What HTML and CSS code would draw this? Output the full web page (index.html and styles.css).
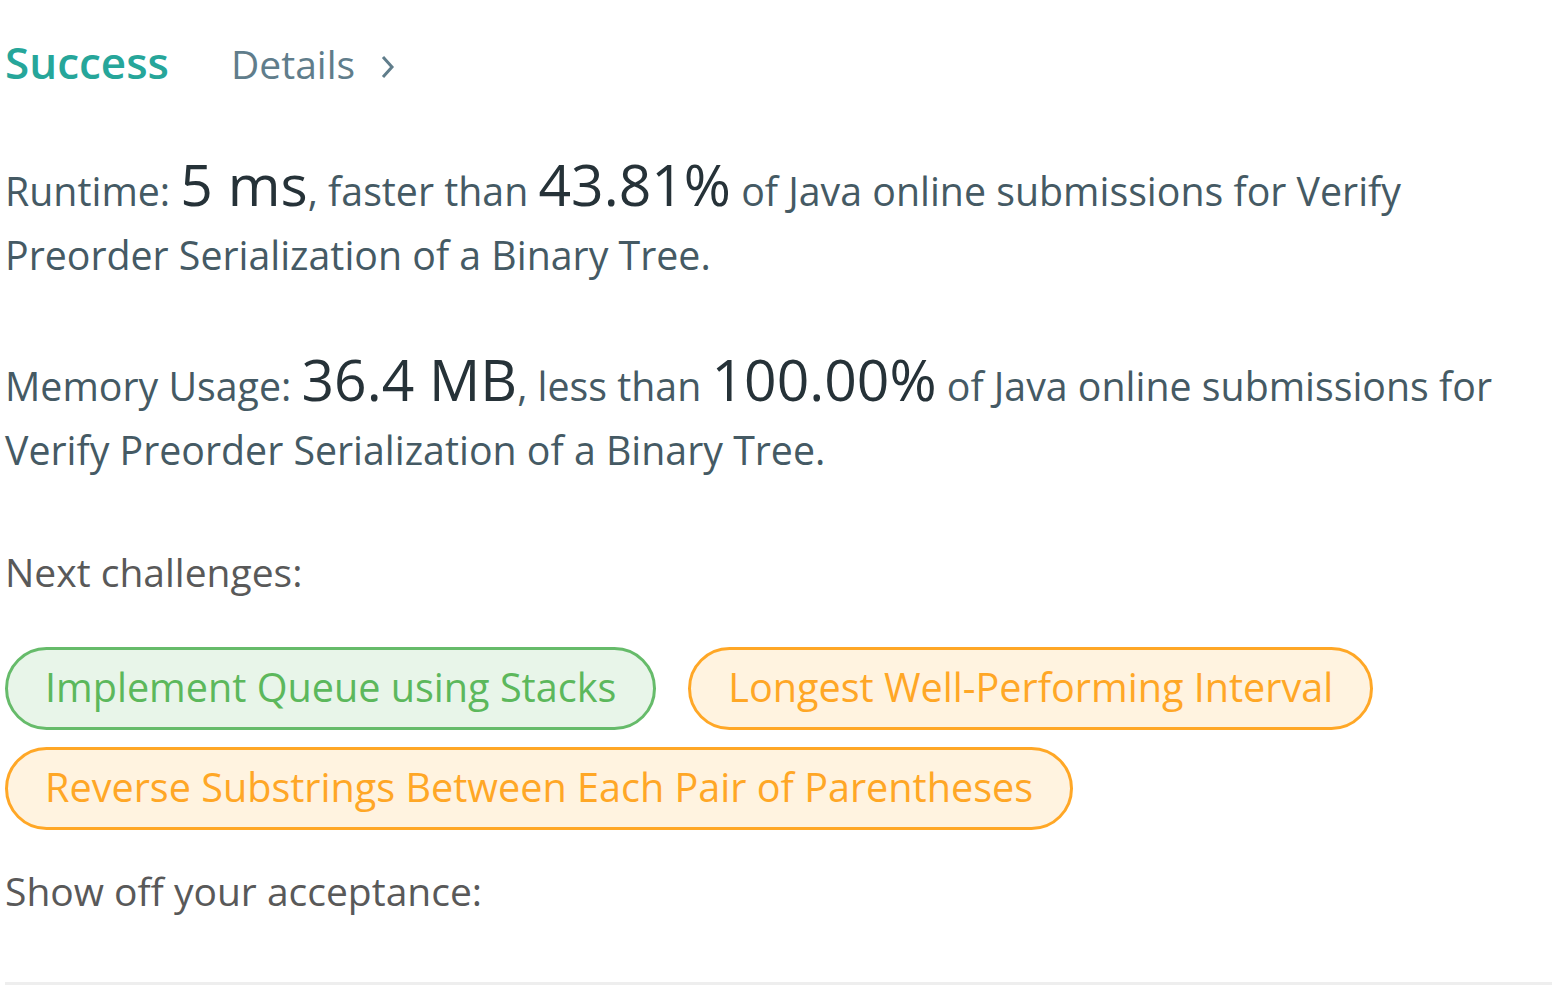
FILE: index.html
```html
<!DOCTYPE html>
<html>
<head>
<meta charset="utf-8">
<link rel="stylesheet" href="styles.css">
</head>
<body>
<div class="page">
  <div class="header">
    <span class="status">Success</span>
    <a class="details">Details <svg class="chev" width="14" height="24" viewBox="0 0 14 24"><path d="M2 2 L11 12 L2 22" fill="none" stroke="#607d8b" stroke-width="3"/></svg></a>
  </div>
  <p class="stat">Runtime: <span class="big">5 ms</span>, faster than <span class="big">43.81%</span> of Java online submissions for Verify Preorder Serialization of a Binary Tree.</p>
  <p class="stat">Memory Usage: <span class="big">36.4 MB</span>, less than <span class="big">100.00%</span> of Java online submissions for Verify Preorder Serialization of a Binary Tree.</p>
  <p class="label">Next challenges:</p>
  <div class="pills">
    <a class="pill easy">Implement Queue using Stacks</a>
    <a class="pill medium">Longest Well-Performing Interval</a>
    <a class="pill medium">Reverse Substrings Between Each Pair of Parentheses</a>
  </div>
  <p class="label show">Show off your acceptance:</p>
  <div class="rule"></div>
</div>
</body>
</html>
```
FILE: styles.css
```css
html, body {
  margin: 0;
  padding: 0;
  background: #fff;
}
body {
  font-family: "Open Sans", "Noto Sans", sans-serif;
  overflow: hidden;
}
.page {
  padding: 0 0 0 5px;
}
.header {
  display: flex;
  align-items: baseline;
  height: 152px;
  padding-top: 32px;
  box-sizing: border-box;
}
.status {
  font-size: 44px;
  font-weight: 600;
  color: #26a69a;
}
.details {
  display: inline-flex;
  align-items: center;
  margin-left: 62px;
  font-size: 39px;
  color: #607d8b;
}
.chev {
  margin-left: 26px;
  margin-top: 6px;
}
.stat {
  margin: 0 0 60px 0;
  font-size: 39.3px;
  line-height: 64px;
  color: #455a64;
}
.big {
  font-size: 57px;
  color: #263238;
}
.label {
  margin: 0;
  font-size: 39px;
  line-height: 64px;
  color: #595959;
}
.stat + .label {
  margin-top: -2px;
}
.pills {
  display: flex;
  flex-wrap: wrap;
  gap: 17px 32px;
  margin-top: 43px;
  margin-bottom: 29px;
}
.pill {
  display: inline-flex;
  align-items: center;
  height: 83px;
  box-sizing: border-box;
  padding: 0 37px 4px 37px;
  border-radius: 42px;
  border: 3px solid;
  font-size: 39.6px;
}
.easy {
  background: #e8f5e9;
  border-color: #66bb6a;
  color: #5cb85c;
}
.medium {
  background: #fff3e0;
  border-color: #ffa726;
  color: #ffa726;
}
.rule {
  margin-top: 59px;
  height: 3px;
  background: #eeeeee;
}
```
